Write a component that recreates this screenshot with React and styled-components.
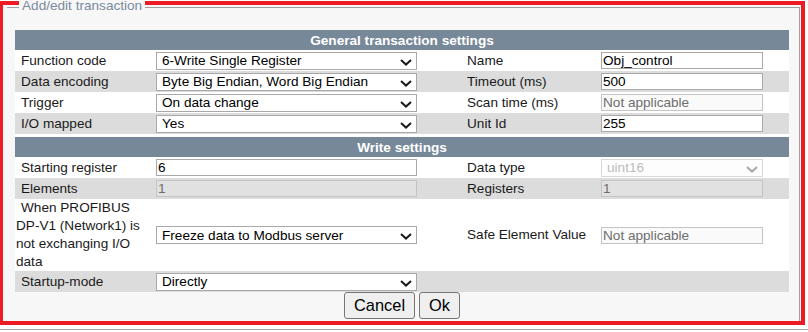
import React from "react";
import styled, { createGlobalStyle } from "styled-components";

const GlobalStyle = createGlobalStyle`
  html, body { margin: 0; padding: 0; background: #fff; overflow: hidden; }
  body { font-family: "Liberation Sans", Arial, sans-serif; }
  * { box-sizing: border-box; }
`;

const FONT = `"Liberation Sans", Arial, sans-serif`;

const Frame = styled.div`
  width: 806px;
  height: 324px;
  margin: 1px 0 0 -1px;
  border: 4px solid #ed1c24;
  background: #f7f7f7;
`;

const Panel = styled.div`
  position: relative;
  margin: 2px 1px 0 4px;
  border-top: 1px solid #a0a0a0;
  border-right: 1px solid #a0a0a0;
  padding: 22px 10px 2px 8px;
`;

const Legend = styled.span`
  position: absolute;
  top: -10px;
  left: 12px;
  padding: 0 3px;
  background: #f7f7f7;
  color: #7a8aa0;
  font-size: 13.6px;
  line-height: 16px;
`;

const Table = styled.div`
  display: flex;
  flex-direction: column;
  background: #fff;
`;

const SectionHeader = styled.div`
  height: 20px;
  margin-top: ${(p) => (p.$gap ? "3px" : "0")};
  display: flex;
  align-items: center;
  justify-content: center;
  background: #778899;
  color: #fff;
  font-weight: bold;
  font-size: 13.6px;
`;

const Row = styled.div`
  display: grid;
  grid-template-columns: 139px 307px 138px 190px;
  align-items: center;
  min-height: 21px;
  background: ${(p) => (p.$shade ? "#dcdcdc" : "#fff")};
`;

const Label = styled.div`
  padding: 0 4px 0 1px;
  text-indent: 5px;
  font-size: 13.6px;
  line-height: 18px;
  color: #1a1a1a;
`;

const Cell = styled.div`
  display: flex;
  align-items: center;
  padding-left: 2px;
`;

const SelectWrap = styled.div`
  position: relative;
  display: flex;
  width: ${(p) => p.$w}px;
`;

const NativeSelect = styled.select`
  appearance: none;
  -webkit-appearance: none;
  width: 100%;
  height: 18px;
  margin: 0;
  padding: 0 20px 0 5px;
  font: 13.6px ${FONT};
  color: #000;
  background: #fff;
  border: 1px solid #a9a9a9;
  border-radius: 0;
  &:disabled {
    color: #a0a0a0;
    border-color: #c8c8c8;
    background: #fdfdfd;
  }
`;

const Chevron = styled.svg`
  position: absolute;
  right: 5px;
  top: 7px;
  width: 12px;
  height: 7px;
  pointer-events: none;
  color: ${(p) => (p.$off ? "#a8a8a8" : "#1a1a1a")};
`;

const Input = styled.input`
  width: ${(p) => p.$w}px;
  height: 17px;
  margin: 0;
  padding: 0 1px;
  font: 13.6px ${FONT};
  color: #000;
  background: #fff;
  border: 1px solid #a9a9a9;
  border-radius: 0;
  &:disabled {
    color: #6d6d6d;
    border-color: #c4c4c4;
    background: rgba(239, 239, 239, 0.3);
  }
`;

const Actions = styled.div`
  display: flex;
  justify-content: center;
  gap: 4px;
`;

const Button = styled.button`
  height: 27px;
  padding: 0 9px;
  font: 16.4px ${FONT};
  color: #000;
  background: #efefef;
  border: 1px solid #767676;
  border-radius: 3px;
`;

const Strip = styled.div`
  margin-top: 4px;
  height: 10px;
  border-top: 1px solid #a8a8a8;
`;

const W1 = 261;
const W2 = 162;

function Select({ w, value, disabled }) {
  return (
    <SelectWrap $w={w}>
      <NativeSelect defaultValue={value} disabled={disabled}>
        <option value={value}>{value}</option>
      </NativeSelect>
      <Chevron $off={disabled} viewBox="0 0 12 7" aria-hidden="true">
        <path d="M1 1 L6 5.6 L11 1" fill="none" stroke="currentColor" strokeWidth="2" />
      </Chevron>
    </SelectWrap>
  );
}

export default function App() {
  return (
    <>
      <GlobalStyle />
      <Frame>
        <Panel>
          <Legend>Add/edit transaction</Legend>
          <Table>
            <SectionHeader>General transaction settings</SectionHeader>
            <Row>
              <Label>Function code</Label>
              <Cell>
                <Select w={W1} value="6-Write Single Register" />
              </Cell>
              <Label>Name</Label>
              <Cell>
                <Input $w={W2} defaultValue="Obj_control" />
              </Cell>
            </Row>
            <Row $shade>
              <Label>Data encoding</Label>
              <Cell>
                <Select w={W1} value="Byte Big Endian, Word Big Endian" />
              </Cell>
              <Label>Timeout (ms)</Label>
              <Cell>
                <Input $w={W2} defaultValue="500" />
              </Cell>
            </Row>
            <Row>
              <Label>Trigger</Label>
              <Cell>
                <Select w={W1} value="On data change" />
              </Cell>
              <Label>Scan time (ms)</Label>
              <Cell>
                <Input $w={W2} defaultValue="Not applicable" disabled />
              </Cell>
            </Row>
            <Row $shade>
              <Label>I/O mapped</Label>
              <Cell>
                <Select w={W1} value="Yes" />
              </Cell>
              <Label>Unit Id</Label>
              <Cell>
                <Input $w={W2} defaultValue="255" />
              </Cell>
            </Row>
            <SectionHeader $gap>Write settings</SectionHeader>
            <Row>
              <Label>Starting register</Label>
              <Cell>
                <Input $w={W1} defaultValue="6" />
              </Cell>
              <Label>Data type</Label>
              <Cell>
                <Select w={W2} value="uint16" disabled />
              </Cell>
            </Row>
            <Row $shade>
              <Label>Elements</Label>
              <Cell>
                <Input $w={W1} defaultValue="1" disabled />
              </Cell>
              <Label>Registers</Label>
              <Cell>
                <Input $w={W2} defaultValue="1" disabled />
              </Cell>
            </Row>
            <Row>
              <Label>When PROFIBUS DP-V1 (Network1) is not exchanging I/O data</Label>
              <Cell>
                <Select w={W1} value="Freeze data to Modbus server" />
              </Cell>
              <Label>Safe Element Value</Label>
              <Cell>
                <Input $w={W2} defaultValue="Not applicable" disabled />
              </Cell>
            </Row>
            <Row $shade>
              <Label>Startup-mode</Label>
              <Cell>
                <Select w={W1} value="Directly" />
              </Cell>
              <Label />
              <Cell />
            </Row>
          </Table>
          <Actions>
            <Button type="button">Cancel</Button>
            <Button type="button">Ok</Button>
          </Actions>
        </Panel>
      </Frame>
      <Strip />
    </>
  );
}
